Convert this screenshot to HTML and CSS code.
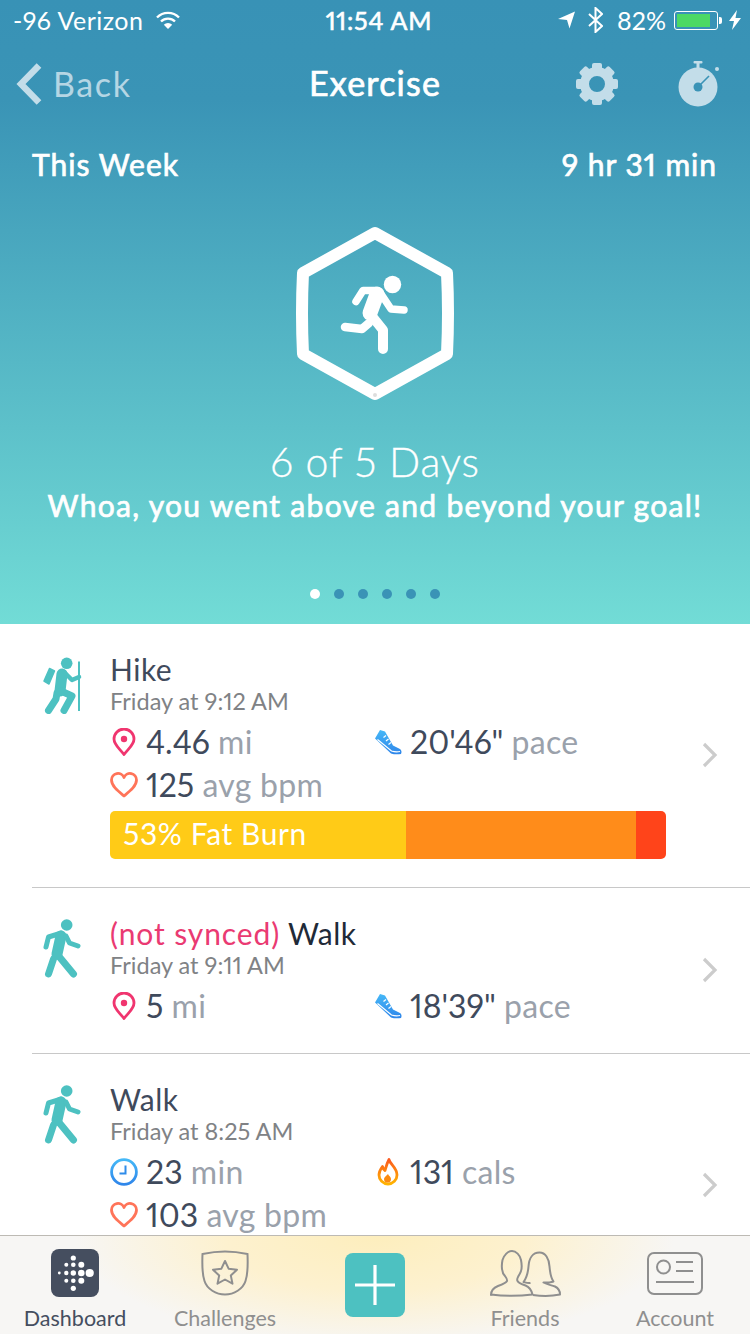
FILE: index.html
```html
<!DOCTYPE html>
<html lang="en">
<head>
    <meta charset="UTF-8">
    <meta name="viewport" content="width=device-width, initial-scale=1.0">
    <title>Exercise</title>
    <link rel="stylesheet" href="styles.css">
</head>
<body>
    <svg class="sprites" width="0" height="0">
        <defs>
            <linearGradient id="blueGrad" x1="0" y1="0" x2="0" y2="1"><stop offset="0" stop-color="#45b8f7"/><stop offset="1" stop-color="#2f86ea"/></linearGradient>
            <linearGradient id="flameGrad" x1="0" y1="0" x2="0" y2="1"><stop offset="0" stop-color="#fb5a1e"/><stop offset="1" stop-color="#ffb400"/></linearGradient>
            <symbol id="hike" viewBox="0 -2 44 60">
                <circle cx="26.7" cy="7.3" r="5.8" fill="#4dc1c1"/>
                <path d="M39 5.5V55" stroke="#4dc1c1" stroke-width="2" fill="none"/>
                <path d="M4 25L9.500 12.500l5 2.500-5.500 13z" fill="#4dc1c1" stroke="#4dc1c1" stroke-width="1.500" stroke-linejoin="round"/>
                <path d="M22 18l-2 17" stroke="#4dc1c1" stroke-width="11" stroke-linecap="round" fill="none"/>
                <path d="M25 17l7 7 7-3" stroke="#4dc1c1" stroke-width="4.500" stroke-linecap="round" stroke-linejoin="round" fill="none"/>
                <path d="M21 35l11 5-8 14.500M17 37l-1 6-7.500 11.500" stroke="#4dc1c1" stroke-width="7" stroke-linecap="round" stroke-linejoin="round" fill="none"/>
            </symbol>
            <symbol id="walk" viewBox="0 0 44 60">
                <circle cx="26.700" cy="7" r="5.800" fill="#4dc1c1"/>
                <path d="M6 29l2.500-10 13-4" stroke="#4dc1c1" stroke-width="5" stroke-linecap="round" stroke-linejoin="round" fill="none"/>
                <path d="M21 18l-4 18" stroke="#4dc1c1" stroke-width="11" stroke-linecap="round" fill="none"/>
                <path d="M26 18l3.500 7 8.500 3" stroke="#4dc1c1" stroke-width="5" stroke-linecap="round" stroke-linejoin="round" fill="none"/>
                <path d="M17 36l16.500 20M13.500 41L8.500 56" stroke="#4dc1c1" stroke-width="7" stroke-linecap="round" fill="none"/>
            </symbol>
            <symbol id="pin" viewBox="0 0 28 28">
                <path d="M14 26.500C10 21 4 17 4 11a10 10 0 0 1 20 0C24 17 18 21 14 26.500z" fill="none" stroke="#f0356f" stroke-width="2.800" stroke-linejoin="round"/>
                <circle cx="14" cy="11" r="3.200" fill="#f0356f"/>
            </symbol>
            <symbol id="heart" viewBox="0 0 28 26">
                <path d="M14 24C8 19 1.500 14 1.500 8a6.500 6.500 0 0 1 12.500-2.500A6.500 6.500 0 0 1 26.500 8C26.500 14 20 19 14 24z" fill="none" stroke="#ff7459" stroke-width="2.800" stroke-linejoin="round"/>
            </symbol>
            <symbol id="shoe" viewBox="0 0 28 26">
                <path d="M6 1L1 9.500 17 24.500c3 1 7 1 10 .500 1-2 .500-4-1-5l-7-3.500-8-14z" fill="url(#blueGrad)"/>
                <path d="M3.500 10.500L17.500 22c3 1 6 1 8.500.500" stroke="#fff" stroke-width="1.200" fill="none"/>
                <path d="M12 6.500l-2.500 2M14.500 10l-2.500 2M17 13.500l-2.500 2" stroke="#fff" stroke-width="1.200" fill="none"/>
            </symbol>
            <symbol id="clock" viewBox="0 0 28 28">
                <circle cx="14" cy="14" r="12.400" fill="none" stroke="url(#blueGrad)" stroke-width="2.800"/>
                <path d="M15.500 7.500V15.500H9.500" fill="none" stroke="#2f8cea" stroke-width="2"/>
            </symbol>
            <symbol id="flame" viewBox="0 0 22 28">
                <path d="M12 1.500c1 5 8 8 8 15.500a9 9 0 0 1-18 0c0-4 2-6.500 3.500-8.500 .5 2 1 3 2.500 4C9 9 10 5 12 1.500z" fill="none" stroke="url(#flameGrad)" stroke-width="2.800" stroke-linejoin="round"/>
                <path d="M11 16c.5 2 3 2.500 3 5a3.500 3.500 0 0 1-7 0c0-2 2.500-3 4-5z" fill="#fb8a10"/>
            </symbol>
            <symbol id="chevron" viewBox="0 0 16 26">
                <path d="M2 2l11 11L2 24" fill="none" stroke="#cccccc" stroke-width="3.200"/>
            </symbol>
        </defs>
    </svg>

    <div class="phone">
        <section class="hero">
            <div class="status-bar">
                <div class="status-left">
                    <span>-96 Verizon</span>
                    <svg class="wifi" width="24" height="18" viewBox="0 0 24 18"><path d="M1 6.500a15.500 15.500 0 0 1 22 0M5 10.500a10 10 0 0 1 14 0" fill="none" stroke="#fff" stroke-width="2.400"/><path d="M12 18L7.800 13.800a6 6 0 0 1 8.400 0z" fill="#fff"/></svg>
                </div>
                <div class="status-time">11:54 AM</div>
                <div class="status-right">
                    <svg class="loc" width="18" height="18" viewBox="0 0 18 18"><path d="M0 8L17 0.500 11.500 17.500 9 9z" fill="#fff"/></svg>
                    <svg class="bt" width="15" height="26" viewBox="0 0 15 26"><path d="M1 7l13 12-6.500 6V1L14 7 1 19" fill="none" stroke="#fff" stroke-width="2"/></svg>
                    <span class="batt-pct">82%</span>
                    <div class="battery"><div class="battery-level"></div></div>
                    <div class="battery-nub"></div>
                    <svg class="bolt" width="12" height="20" viewBox="0 0 12 20"><path d="M8 0L0 11h5l-2 9 9-12H6.500z" fill="#fff"/></svg>
                </div>
            </div>

            <div class="nav-bar">
                <div class="nav-back">
                    <svg width="26" height="44" viewBox="0 0 26 44"><path d="M23 3.500L5 22l18 18.500" fill="none" stroke="#c3dde9" stroke-width="6.500"/></svg>
                    <span>Back</span>
                </div>
                <div class="nav-title">Exercise</div>
                <div class="nav-actions">
                    <svg width="44" height="44" viewBox="0 0 44 44">
                        <circle cx="22" cy="22" r="12.500" fill="none" stroke="#c3dde9" stroke-width="9"/>
                        <g fill="#c3dde9">
                            <rect x="17" y="1" width="10" height="8" rx="2"/>
                            <rect x="17" y="1" width="10" height="8" rx="2" transform="rotate(45 22 22)"/>
                            <rect x="17" y="1" width="10" height="8" rx="2" transform="rotate(90 22 22)"/>
                            <rect x="17" y="1" width="10" height="8" rx="2" transform="rotate(135 22 22)"/>
                            <rect x="17" y="1" width="10" height="8" rx="2" transform="rotate(180 22 22)"/>
                            <rect x="17" y="1" width="10" height="8" rx="2" transform="rotate(225 22 22)"/>
                            <rect x="17" y="1" width="10" height="8" rx="2" transform="rotate(270 22 22)"/>
                            <rect x="17" y="1" width="10" height="8" rx="2" transform="rotate(315 22 22)"/>
                        </g>
                    </svg>
                    <svg width="48" height="46" viewBox="0 0 48 46">
                        <circle cx="22" cy="26" r="19.500" fill="#c3dde9"/>
                        <rect x="17.500" y="0" width="9" height="2.500" rx="1" fill="#c3dde9"/>
                        <rect x="20.500" y="2" width="3" height="5" fill="#c3dde9"/>
                        <circle cx="41" cy="8" r="2" fill="#c3dde9"/>
                        <path d="M22 26L33 15" stroke="#3a93b6" stroke-width="1.600"/>
                        <circle cx="22" cy="26" r="4.500" fill="#3a93b6"/>
                    </svg>
                </div>
            </div>

            <div class="week-row">
                <span>This Week</span>
                <span>9 hr 31 min</span>
            </div>

            <div class="badge">
                <svg width="170" height="184" viewBox="0 0 170 184">
                    <path d="M85 11L157 51Q159 91 157 132L85 172 13 132Q11 91 13 51z" fill="none" stroke="#fff" stroke-width="12" stroke-linejoin="round"/>
                    <circle cx="85" cy="173" r="2" fill="#dddddd"/>
                    <circle cx="102.500" cy="62.500" r="8.700" fill="#fff"/>
                    <g fill="none" stroke="#fff" stroke-linecap="round" stroke-linejoin="round">
                        <path d="M66 79.500L73 68.500H85" stroke-width="7.500"/>
                        <path d="M87 72L80 91" stroke-width="15"/>
                        <path d="M91 72l10 15 13 1" stroke-width="7.500"/>
                        <path d="M81 93l12 15v19" stroke-width="10"/>
                        <path d="M55 105l17 2 7-6" stroke-width="8.500"/>
                    </g>
                </svg>
            </div>

            <div class="goal-count">6 of 5 Days</div>
            <div class="goal-msg">Whoa, you went above and beyond your goal!</div>

            <div class="pager">
                <span class="dot dot-on"></span>
                <span class="dot"></span>
                <span class="dot"></span>
                <span class="dot"></span>
                <span class="dot"></span>
                <span class="dot"></span>
            </div>
        </section>

        <section class="list">
            <div class="row">
                <svg class="act-icon"><use href="#hike"/></svg>
                <div class="row-body">
                    <div class="row-title">Hike</div>
                    <div class="row-date">Friday at 9:12 AM</div>
                    <div class="stats">
                        <div class="stat"><svg class="stat-icon"><use href="#pin"/></svg><span>4.46 <em>mi</em></span></div>
                        <div class="stat"><svg class="stat-icon"><use href="#shoe"/></svg><span>20'46" <em>pace</em></span></div>
                        <div class="stat"><svg class="stat-icon"><use href="#heart"/></svg><span>125 <em>avg bpm</em></span></div>
                    </div>
                    <div class="zone-bar">
                        <div class="zone zone-fat">53% Fat Burn</div>
                        <div class="zone zone-cardio"></div>
                        <div class="zone zone-peak"></div>
                    </div>
                </div>
                <svg class="chevron"><use href="#chevron"/></svg>
            </div>

            <div class="row">
                <svg class="act-icon"><use href="#walk"/></svg>
                <div class="row-body">
                    <div class="row-title dark"><span class="unsynced">(not synced)</span> Walk</div>
                    <div class="row-date">Friday at 9:11 AM</div>
                    <div class="stats">
                        <div class="stat"><svg class="stat-icon"><use href="#pin"/></svg><span>5 <em>mi</em></span></div>
                        <div class="stat"><svg class="stat-icon"><use href="#shoe"/></svg><span>18'39" <em>pace</em></span></div>
                    </div>
                </div>
                <svg class="chevron"><use href="#chevron"/></svg>
            </div>

            <div class="row">
                <svg class="act-icon"><use href="#walk"/></svg>
                <div class="row-body">
                    <div class="row-title">Walk</div>
                    <div class="row-date">Friday at 8:25 AM</div>
                    <div class="stats">
                        <div class="stat"><svg class="stat-icon"><use href="#clock"/></svg><span>23 <em>min</em></span></div>
                        <div class="stat"><svg class="stat-icon"><use href="#flame"/></svg><span>131 <em>cals</em></span></div>
                        <div class="stat"><svg class="stat-icon"><use href="#heart"/></svg><span>103 <em>avg bpm</em></span></div>
                    </div>
                    <div class="zone-bar">
                        <div class="zone zone-fat"></div>
                        <div class="zone zone-cardio"></div>
                    </div>
                </div>
                <svg class="chevron"><use href="#chevron"/></svg>
            </div>
        </section>

        <nav class="tabs">
            <div class="tab tab-active">
                <svg width="48" height="48" viewBox="0 0 48 48">
                    <rect width="48" height="48" rx="8" fill="#454e5f"/>
                    <g fill="#fff">
                        <circle cx="22.300" cy="9" r="2.600"/>
                        <circle cx="15.300" cy="15.700" r="2"/><circle cx="22.300" cy="15.700" r="2.300"/><circle cx="30.300" cy="15.700" r="3"/>
                        <circle cx="8.300" cy="24" r="1.400"/><circle cx="15.300" cy="24" r="2.200"/><circle cx="22.300" cy="24" r="2.700"/><circle cx="30.300" cy="24" r="3.300"/><circle cx="38.700" cy="24" r="4.100"/>
                        <circle cx="15.300" cy="31.700" r="2"/><circle cx="22.300" cy="31.700" r="2.300"/><circle cx="30.300" cy="31.700" r="3"/>
                        <circle cx="22.300" cy="39.300" r="2.600"/>
                    </g>
                </svg>
                <span>Dashboard</span>
            </div>
            <div class="tab">
                <svg width="48" height="48" viewBox="0 0 48 48">
                    <path d="M24 2.500c7 0 14 .7 22.500 2.500.5 12 .5 20-2 27C42 40 33 45.500 24 45.500S6 40 3.500 32C1 25 1 17 1.500 5 10 3.200 17 2.500 24 2.500z" fill="none" stroke="#8f8f8f" stroke-width="2"/>
                    <path d="M24 12l3.600 7.700 8.400 1-6.200 5.700 1.700 8.300L24 30.500l-7.500 4.200 1.700-8.300-6.200-5.700 8.400-1z" fill="none" stroke="#8f8f8f" stroke-width="2" stroke-linejoin="round"/>
                </svg>
                <span>Challenges</span>
            </div>
            <div class="tab-add">
                <svg width="40" height="40" viewBox="0 0 40 40"><path d="M20 0V40M0 20H40" stroke="#fff" stroke-width="3.200"/></svg>
            </div>
            <div class="tab">
                <svg width="72" height="48" viewBox="0 0 72 48">
                    <path d="M2 46c0-4 2-7 7-9 4-1.500 8-3 9-5 .5-1.500-.5-3-2-5-2-2-2.500-4-2.500-5-1-3-1-6 0-11C15 6 19 2 23 2s8 4 9 9c1 5 1 8 0 11-.5 2-1.500 3-2.500 5-1 2-2 3.500-1 5 1 2 5 3.500 8 4.500 4 1.500 6 5 7 9-12 1.500-30 1.500-41.500 0z" fill="none" stroke="#8f8f8f" stroke-width="2" stroke-linejoin="round"/>
                    <path d="M44 46c10 1.500 20 1 27-.5 0-4-2-6.500-5-8-4-1.500-8-2-11.500-4 5 .5 8-.500 10-1-3-4-3.500-9-4-15-.5-8-4-14-10-14-7 0-10.500 6-11 14-.5 6-1.500 11-5 15.500 2 .5 4 1.500 7 1" fill="none" stroke="#8f8f8f" stroke-width="2" stroke-linejoin="round"/>
                </svg>
                <span>Friends</span>
            </div>
            <div class="tab">
                <svg width="56" height="48" viewBox="0 0 56 48">
                    <rect x="1" y="4" width="54" height="41" rx="6" fill="none" stroke="#8f8f8f" stroke-width="2"/>
                    <circle cx="16.500" cy="18" r="6.500" fill="none" stroke="#8f8f8f" stroke-width="2"/>
                    <path d="M29 13H46M29 22H46M9 33H47" stroke="#8f8f8f" stroke-width="2"/>
                </svg>
                <span>Account</span>
            </div>
        </nav>
    </div>
</body>
</html>
```

FILE: styles.css
```css
* { margin: 0; padding: 0; box-sizing: border-box; }
body { font-family: Lato, "Open Sans", sans-serif; background: #fff; color: #3f4a5c; font-feature-settings: "pnum"; font-variant-numeric: proportional-nums; }
.sprites { position: absolute; }
.phone { width: 750px; height: 1334px; display: flex; flex-direction: column; overflow: hidden; }

/* hero */
.hero { height: 624px; flex: none; color: #fff; background: linear-gradient(#3892b6 0, #3a94b6 100px, #72dcd6 100%); }
.status-bar { height: 41px; display: grid; grid-template-columns: 1fr auto 1fr; align-items: center; padding: 0 9px 1px 13px; font-size: 25px; }
.status-left { display: flex; align-items: center; gap: 13px; letter-spacing: 0.5px; }
.status-time { -webkit-text-stroke: 0.6px #fff; letter-spacing: 0.8px; margin-left: 4px; }
.status-right { display: flex; align-items: center; justify-content: flex-end; }
.loc { margin-right: 12px; }
.bt { margin-right: 14px; }
.batt-pct { margin-right: 8px; }
.battery { width: 44px; height: 19px; border: 1px solid #fff; border-radius: 3px; padding: 2px; }
.battery-level { width: 33px; height: 100%; background: #4cd964; }
.battery-nub { width: 3px; height: 7px; background: #fff; border-radius: 0 2px 2px 0; margin: 0 7px 0 1px; }

.nav-bar { height: 86px; display: grid; grid-template-columns: 1fr auto 1fr; align-items: center; }
.nav-back { display: flex; align-items: center; gap: 11px; padding-left: 16px; font-size: 34px; letter-spacing: 1.6px; color: #b5d6e4; padding-bottom: 1px; }
.nav-title { font-size: 34px; letter-spacing: 1.2px; -webkit-text-stroke: 0.7px #fff; padding-bottom: 3px; }
.nav-actions { display: flex; justify-content: flex-end; align-items: center; gap: 57px; padding-right: 26px; }

.week-row { display: flex; justify-content: space-between; padding: 0 33px 0 32px; font-size: 30px; letter-spacing: 1px; -webkit-text-stroke: 0.7px #fff; line-height: 38px; margin-top: 18px; }

.badge { display: flex; justify-content: center; margin-top: 39px; }
.goal-count { text-align: center; font-size: 41px; letter-spacing: 0.7px; font-weight: 300; -webkit-text-stroke: 0.3px #fff; line-height: 50px; margin-top: 31px; }
.goal-msg { text-align: center; font-size: 30px; letter-spacing: 1.3px; -webkit-text-stroke: 0.7px #fff; line-height: 36px; }
.pager { display: flex; justify-content: center; gap: 14px; margin-top: 66px; }
.dot { width: 10px; height: 10px; border-radius: 50%; background: #3a93b6; }
.dot-on { background: #fff; }

/* activity list */
.list { flex: 1; min-height: 0; overflow: hidden; }
.row { display: flex; align-items: center; margin-left: 32px; padding: 27px 32px 26px 0; border-bottom: 1px solid #c8c8c8; }
.act-icon { width: 44px; height: 60px; flex: none; align-self: flex-start; margin: 3px 26px 0 8px; }
.row-body { flex: 1; }
.row-title { font-size: 30px; letter-spacing: 0.5px; line-height: 36px; }
.row-title.dark { color: #1f2a38; }
.unsynced { color: #ea3a72; letter-spacing: 0.9px; }
.row-date { font-size: 23.5px; line-height: 28px; color: #808285; }
.stats { display: grid; grid-template-columns: 264px 1fr; margin-top: 5px; }
.stat { display: flex; align-items: center; gap: 8px; height: 43px; font-size: 32px; }
.stat em { font-style: normal; color: #9aa1ab; letter-spacing: 0.3px; }
.stat-icon { width: 28px; height: 28px; flex: none; }
.chevron { width: 16px; height: 26px; flex: none; margin: 0 0 2px 36px; }

.zone-bar { display: flex; height: 48px; margin: 5px 0 2px; border-radius: 5px; overflow: hidden; }
.zone { font-size: 30px; letter-spacing: 0.6px; line-height: 45px; color: #fff; padding-left: 13px; }
.zone-fat { width: 296px; background: #ffcb17; }
.zone-cardio { width: 230px; background: #ff8c1a; }
.zone-peak { width: 30px; background: #ff441a; }

/* tab bar */
.tabs { height: 99px; flex: none; display: flex; border-top: 1px solid #bdbab4; background: radial-gradient(ellipse 300px 110px at 375px 0, #fdeebd 0, #fdf1cf 50%, #f7f6f4 100%); }
.tab { width: 150px; display: flex; flex-direction: column; align-items: center; padding-top: 13px; font-size: 21.5px; color: #8f8f8f; }
.tab span { line-height: 28px; margin-top: 7px; }
.tab-active { color: #454e5f; }
.tab-add { width: 60px; height: 64px; margin: 17px 45px 0; background: #4dc1c1; border-radius: 8px; display: flex; align-items: center; justify-content: center; }
```
